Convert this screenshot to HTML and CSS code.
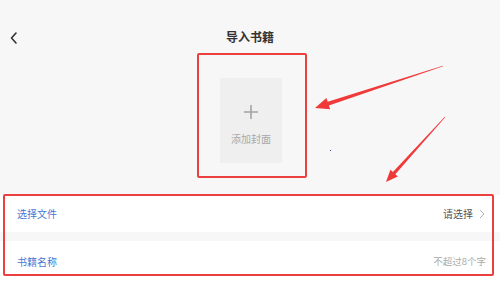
FILE: index.html
```html
<!DOCTYPE html>
<html lang="zh">
<head>
<meta charset="utf-8">
<link rel="stylesheet" href="styles.css">
</head>
<body>
<div class="page">
  <div class="header">
    <svg class="back" width="10" height="14" viewBox="0 0 10 14"><path d="M7 2 L2.5 7 L7 12" fill="none" stroke="#333" stroke-width="1.6" stroke-linecap="round" stroke-linejoin="round"/></svg>
    <div class="title">导入书籍</div>
  </div>
  <div class="cover-wrap">
    <div class="cover">
      <svg class="plus" width="16" height="16" viewBox="0 0 16 16"><path d="M8 1 V15 M1 8 H15" stroke="#a3a3a3" stroke-width="1.6"/></svg>
      <div class="cover-text">添加封面</div>
    </div>
  </div>
  <div class="list">
    <div class="row">
      <span class="label">选择文件</span>
      <span class="value dark">请选择<svg class="chev" width="6" height="10" viewBox="0 0 6 10"><path d="M1 1 L5 5 L1 9" fill="none" stroke="#b0b0b0" stroke-width="1"/></svg></span>
    </div>
    <div class="row row2">
      <span class="label">书籍名称</span>
      <span class="value light">不超过8个字</span>
    </div>
  </div>
  <div class="mark mark1"></div>
  <div class="mark mark2"></div>
  <div class="dot"></div>
  <svg class="arrows" width="500" height="281" viewBox="0 0 500 281">
    <polygon fill="#f03a3a" points="315,108 330.2,109.3 328.9,105.5 443.1,66.3 442.9,65.7 327.7,101.7 326.4,97.9"/>
    <polygon fill="#f03a3a" points="386,182 397.8,176.5 395.3,174.2 445.2,117.2 444.8,116.8 392.9,172 390.4,169.7"/>
  </svg>
</div>
</body>
</html>
```
FILE: styles.css
```css
html, body {
  margin: 0;
  padding: 0;
}
body {
  background: #f7f7f7;
  font-family: "Noto Sans CJK SC", "Noto Sans", sans-serif;
  width: 500px;
  height: 281px;
  overflow: hidden;
}
.page {
  position: relative;
  width: 500px;
  height: 281px;
  overflow: hidden;
}
.header {
  position: relative;
  height: 52px;
  display: flex;
  align-items: center;
  justify-content: center;
  padding-top: 12px;
}
.back {
  position: absolute;
  left: 9px;
  top: 31px;
}
.title {
  font-size: 12px;
  font-weight: 700;
  color: #333;
  line-height: 18px;
  margin-top: -2px;
}
.cover-wrap {
  display: flex;
  justify-content: center;
  margin-top: 14px;
  padding-left: 2px;
}
.cover {
  width: 62px;
  height: 85px;
  background: #efefef;
  display: flex;
  flex-direction: column;
  align-items: center;
  box-sizing: border-box;
  padding-top: 26px;
}
.plus {
  display: block;
}
.cover-text {
  margin-top: 12px;
  font-size: 10px;
  line-height: 14px;
  color: #a8a8a8;
}
.list {
  margin-top: 32px;
}
.row {
  background: #fff;
  height: 37px;
  display: flex;
  align-items: center;
  justify-content: space-between;
  padding: 0 15px 0 17px;
}
.row2 {
  margin-top: 9px;
  height: 40px;
}
.label {
  font-size: 10px;
  color: #4a76d4;
}
.value {
  display: flex;
  align-items: center;
}
.dark {
  font-size: 10px;
  color: #555;
}
.light {
  font-size: 9.5px;
  color: #a9a9a9;
  margin-right: -1px;
}
.chev {
  margin-left: 6px;
}
.mark {
  position: absolute;
  border: 2px solid #ec3f3f;
  border-radius: 2px;
  box-sizing: border-box;
}
.mark1 {
  left: 197px;
  top: 53px;
  width: 110px;
  height: 125px;
}
.mark2 {
  left: 3px;
  top: 194px;
  width: 491px;
  height: 82px;
}
.dot {
  position: absolute;
  left: 330px;
  top: 150px;
  width: 1px;
  height: 1px;
  background: #3a4aa0;
}
.arrows {
  position: absolute;
  left: 0;
  top: 0;
}
```
